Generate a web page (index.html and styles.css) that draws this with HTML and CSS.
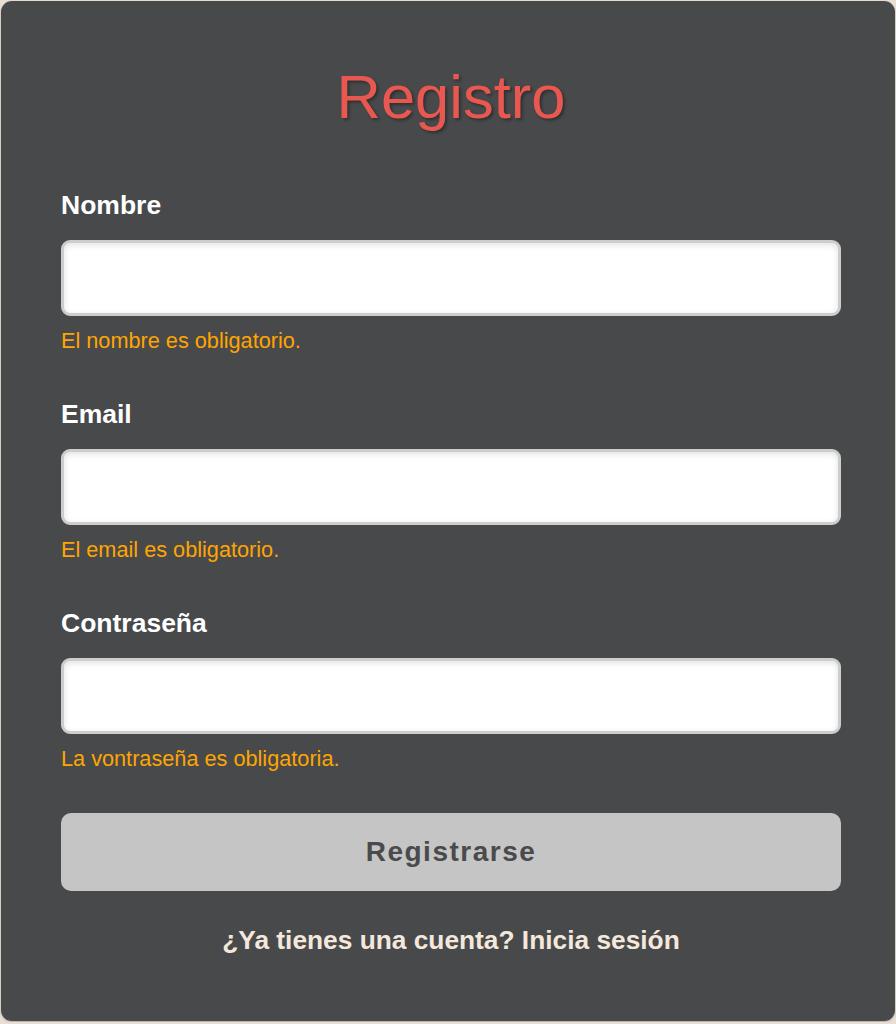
FILE: index.html
```html
<!DOCTYPE html>
<html lang="es">
<head>
<meta charset="utf-8">
<title>Registro</title>
<link rel="stylesheet" href="styles.css">
</head>
<body>
<main class="card">
  <h1 class="title">Registro</h1>
  <form class="form">
    <div class="field">
      <label class="label" for="nombre">Nombre</label>
      <input class="input" id="nombre" type="text">
      <p class="error">El nombre es obligatorio.</p>
    </div>
    <div class="field">
      <label class="label" for="email">Email</label>
      <input class="input" id="email" type="email">
      <p class="error">El email es obligatorio.</p>
    </div>
    <div class="field">
      <label class="label" for="pass">Contraseña</label>
      <input class="input" id="pass" type="password">
      <p class="error">La vontraseña es obligatoria.</p>
    </div>
    <button class="submit" type="button">Registrarse</button>
    <p class="login">¿Ya tienes una cuenta? Inicia sesión</p>
  </form>
</main>
</body>
</html>
```
FILE: styles.css
```css
html, body {
  margin: 0;
  padding: 0;
}
body {
  background: #e8ded3;
  padding: 1px;
  font-family: "Liberation Sans", Arial, sans-serif;
}
.card {
  background: #48494b;
  border-radius: 11px;
  box-shadow: 0 1px 2px rgba(0, 0, 0, 0.25);
  padding: 61px 54px 66px 60px;
  height: 1020px;
  box-sizing: border-box;
}
.title {
  margin: 0;
  text-align: center;
  font-size: 61.5px;
  line-height: 70px;
  font-weight: normal;
  color: #e85850;
  text-shadow: 2px 2px 3px rgba(0, 0, 0, 0.35);
}
.form {
  display: flex;
  flex-direction: column;
  margin-top: 58px;
}
.field {
  display: flex;
  flex-direction: column;
  margin-bottom: 46.5px;
}
.field:nth-child(3) {
  margin-bottom: 42.5px;
}
.label {
  font-size: 26.5px;
  line-height: 30px;
  font-weight: bold;
  color: #ffffff;
  margin-bottom: 20px;
}
.input {
  box-sizing: border-box;
  width: 780px;
  height: 76px;
  margin: 0;
  border: 3px solid #cdcdcd;
  border-radius: 9px;
  background: #ffffff;
  box-shadow: inset 0 2px 6px rgba(0, 0, 0, 0.12);
  outline: none;
}
.error {
  margin: 11.5px 0 0;
  font-size: 21.7px;
  line-height: 25px;
  color: #ffa500;
}
.submit {
  width: 780px;
  height: 78px;
  border: none;
  border-radius: 10px;
  background: #c5c5c5;
  color: #4a4a4c;
  font-family: "Liberation Sans", Arial, sans-serif;
  font-size: 28px;
  font-weight: bold;
  letter-spacing: 1.5px;
  padding: 0;
}
.login {
  margin: 34px 0 0;
  text-align: center;
  font-size: 26.3px;
  line-height: 30px;
  font-weight: bold;
  color: #f4e8dc;
}
```
